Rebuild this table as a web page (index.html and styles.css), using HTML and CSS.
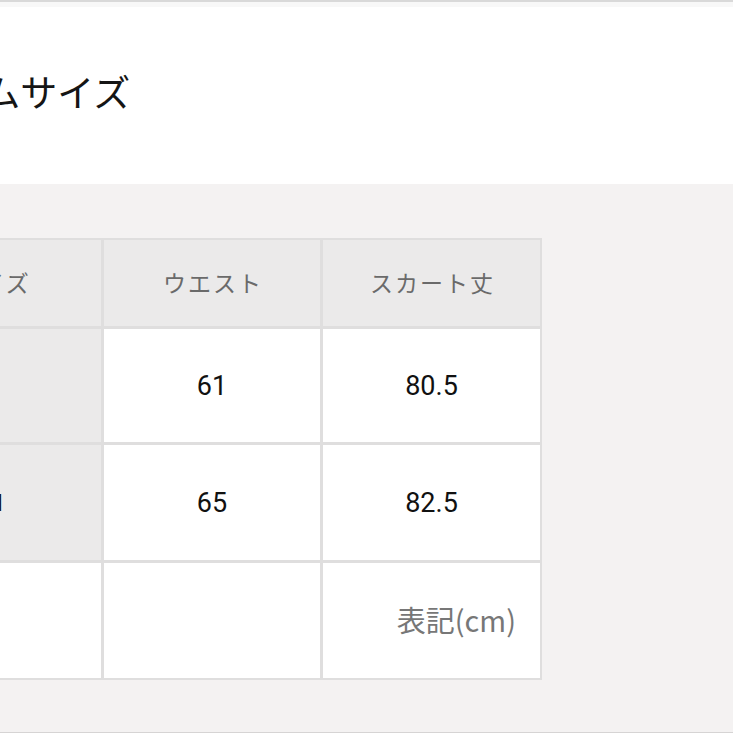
FILE: index.html
```html
<!DOCTYPE html>
<html lang="ja">
<head>
<meta charset="utf-8">
<link rel="stylesheet" href="styles.css">
</head>
<body>
<div class="page">
  <div class="topline"></div>
  <header class="title-section">
    <h1 class="title">アイテムサイズ</h1>
  </header>
  <section class="size-section">
    <div class="size-table">
      <div class="cell head">サイズ</div>
      <div class="cell head">ウエスト</div>
      <div class="cell head">スカート丈</div>

      <div class="cell label">S</div>
      <div class="cell num">61</div>
      <div class="cell num">80.5</div>

      <div class="cell label">M</div>
      <div class="cell num">65</div>
      <div class="cell num">82.5</div>

      <div class="cell blank"></div>
      <div class="cell blank"></div>
      <div class="cell note">表記(cm)</div>
    </div>
  </section>
</div>
</body>
</html>
```

FILE: styles.css
```css
html, body {
  margin: 0;
  padding: 0;
}

body {
  background: #f4f2f2;
  font-family: "Noto Sans CJK JP", "Noto Sans", sans-serif;
  overflow: hidden;
}

.page {
  width: 733px;
  height: 733px;
  overflow: hidden;
  display: flex;
  flex-direction: column;
}

.topline {
  height: 2px;
  background: #d9d9d9;
  border-bottom: 5px solid #f8f8f8;
  flex: none;
}

.title-section {
  background: #ffffff;
  height: 177px;
  flex: none;
  display: flex;
  align-items: center;
}

.title {
  margin: 0 0 0 -124px;
  font-size: 37px;
  font-weight: 400;
  line-height: 37px;
  color: #151515;
  white-space: nowrap;
  padding-bottom: 8px;
}

.size-section {
  flex: 1;
  background: #f4f2f2;
  border-bottom: 1px solid #d6d4d4;
  padding-top: 54px;
}

.size-table {
  margin-left: -118px;
  width: 656px;
  padding: 2px;
  background: #dfdede;
  display: grid;
  grid-template-columns: 217px 216px 217px;
  grid-template-rows: 86px 113px 115px 115px;
  gap: 3px;
}

.cell {
  display: flex;
  align-items: center;
  justify-content: center;
  background: #ffffff;
  color: #111;
}

.head {
  background: #ebeaea;
  color: #6a6a6a;
  font-size: 23px;
  letter-spacing: 2px;
  padding-left: 2px;
  padding-bottom: 3px;
}

.label {
  background: #ebeaea;
  font-family: Roboto, "Noto Sans", sans-serif;
  font-size: 24px;
}

.num {
  font-family: Roboto, "Noto Sans", sans-serif;
  font-size: 27px;
  color: #111;
}

.note {
  justify-content: flex-end;
  padding-right: 24px;
  padding-bottom: 4px;
  font-size: 29px;
  color: #777;
}
```
